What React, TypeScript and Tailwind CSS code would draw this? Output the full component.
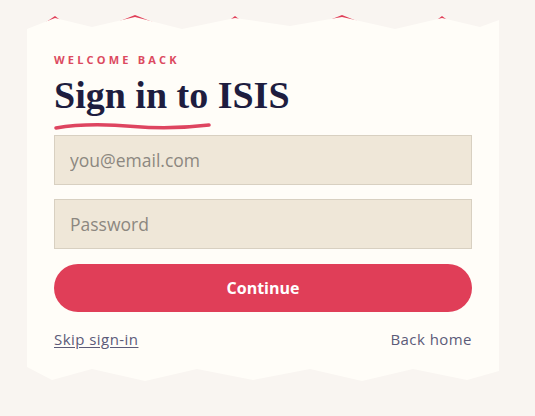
export default function App() {
  return (
    <div className="min-h-screen bg-[#f9f5f1] pl-[27px] pt-[17px] font-['Open_Sans',sans-serif]">
      <div className="relative w-[472px]">
        {/* red strip peeking at the torn peaks */}
        <div className="absolute -top-[2px] left-0 h-[40px] w-[472px] bg-[#e03e58] [clip-path:polygon(0_20px,28px_1px,53px_20px,58px_20px,108px_0,158px_20px,183px_20px,208px_1px,233px_20px,265px_20px,315px_0,365px_20px,390px_20px,415px_1px,440px_20px,472px_20px,472px_40px,0_40px)]" />
        <div className="relative flex flex-col bg-[#fffdf8] px-[27px] pb-[31px] pt-[35px] [clip-path:polygon(0_12px,28px_1px,65px_10px,108px_0,155px_12px,208px_1px,263px_9px,315px_0,368px_12px,415px_1px,453px_10px,472px_3px,472px_calc(100%_-_10px),440px_calc(100%_-_1px),386px_calc(100%_-_12px),335px_100%,283px_calc(100%_-_12px),226px_calc(100%_-_1px),170px_calc(100%_-_12px),118px_100%,65px_calc(100%_-_12px),25px_calc(100%_-_1px),0_calc(100%_-_14px))]">
          <p className="text-[11px] font-bold uppercase leading-[16px] tracking-[0.29em] text-[#dc4a60]">
            Welcome back
          </p>
          <h1 className="mt-[6px] font-['Liberation_Serif',serif] text-[38px] font-bold leading-[42px] text-[#1e1d3f]">
            Sign in to ISIS
          </h1>
          <svg width="160" height="12" viewBox="0 0 160 12" className="mt-[4px]">
            <path
              d="M2 8 C 25 4, 50 4, 80 6.5 S 130 8, 155 5"
              fill="none"
              stroke="#de4560"
              strokeWidth="3.5"
              strokeLinecap="round"
            />
          </svg>
          <input
            type="email"
            placeholder="you@email.com"
            className="mt-[3px] h-[50px] w-full border border-[#d8d0c1] bg-[#efe7d8] px-[15px] text-[17.5px] text-[#1e1d3f] outline-none placeholder:text-[#8c8780]"
          />
          <input
            type="password"
            placeholder="Password"
            className="mt-[14px] h-[50px] w-full border border-[#d8d0c1] bg-[#efe7d8] px-[15px] text-[17.5px] text-[#1e1d3f] outline-none placeholder:text-[#8c8780]"
          />
          <button className="mt-[15px] h-[48px] w-full rounded-full bg-[#e03e58] text-[16px] font-bold text-white">
            Continue
          </button>
          <div className="mt-[16px] flex items-center justify-between text-[15px] leading-[22px] tracking-[0.03em] text-[#5c5b78]">
            <a href="#" className="underline underline-offset-2">
              Skip sign-in
            </a>
            <a href="#">Back home</a>
          </div>
        </div>
      </div>
    </div>
  );
}
